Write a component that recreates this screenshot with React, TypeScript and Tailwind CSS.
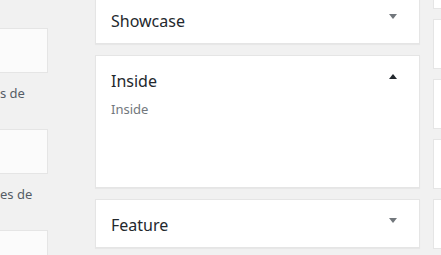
import React from "react";

const font = { fontFamily: '"Noto Sans", "Open Sans", Arial, sans-serif' };

function Arrow({ up }: { up?: boolean }) {
  return (
    <svg width="8" height="5" viewBox="0 0 8 5" className="mt-[3px] shrink-0">
      {up ? (
        <polygon points="0,5 8,5 4,0" fill="#23282d" />
      ) : (
        <polygon points="0,0 8,0 4,5" fill="#72777c" />
      )}
    </svg>
  );
}

function Postbox({ title, open }: { title: string; open?: boolean }) {
  return (
    <div
      className={`border border-[#e5e5e5] bg-white shadow-[0_1px_1px_rgba(0,0,0,0.04)] ${
        open ? "h-[133px]" : "h-[49px]"
      }`}
    >
      <div className="flex items-start justify-between pl-[15px] pr-[22px] pt-[15px]">
        <h2 className="text-[16px] leading-5 font-normal text-[#23282d]">{title}</h2>
        <Arrow up={open} />
      </div>
      {open && (
        <p className="mt-[10px] pl-[15px] text-[13px] leading-4 text-[#72777c]">Inside</p>
      )}
    </div>
  );
}

export default function App() {
  const sideNotes = ["s de", "es de", ""];
  return (
    <div className="flex h-[255px] w-[441px] items-start overflow-hidden bg-[#f1f1f1]" style={font}>
      {/* left settings column, cut off by the window */}
      <div className="mt-[28px] flex w-[48px] shrink-0 flex-col">
        {sideNotes.map((note, i) => (
          <div key={i}>
            <div className="h-[45px] border border-l-0 border-[#e5e5e5] bg-[#fbfbfb]" />
            <p className="mt-[12px] mb-[28px] h-4 whitespace-nowrap text-[13px] leading-4 text-[#555d66]">
              {note}
            </p>
          </div>
        ))}
      </div>

      {/* sortable boxes */}
      <div className="ml-[47px] mt-[-5px] flex w-[325px] shrink-0 flex-col gap-[11px]">
        <Postbox title="Showcase" />
        <Postbox title="Inside" open />
        <Postbox title="Feature" />
      </div>

      {/* right column */}
      <div className="ml-[13px] mt-[-41px] flex w-[40px] shrink-0 flex-col gap-[10px]">
        {[0, 1, 2, 3, 4, 5].map((i) => (
          <div key={i} className="h-[50px] border border-[#e5e5e5] bg-white" />
        ))}
      </div>
    </div>
  );
}
